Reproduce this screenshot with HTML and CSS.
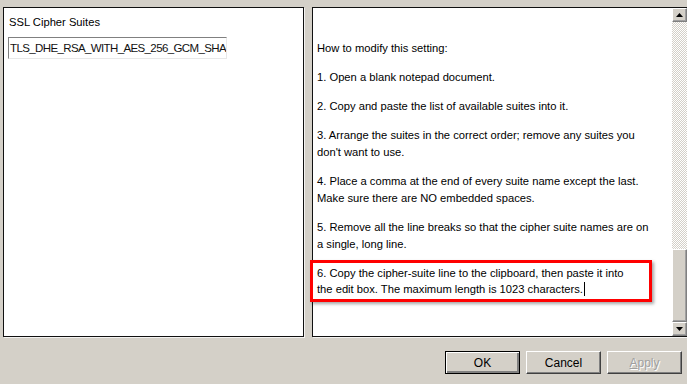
FILE: index.html
```html
<!DOCTYPE html>
<html>
<head>
<meta charset="utf-8">
<link rel="stylesheet" href="styles.css">
</head>
<body>
<div class="dialog">
  <div class="panels">
    <div class="panel left">
      <div class="label">SSL Cipher Suites</div>
      <div class="field"><span class="field-text">TLS_DHE_RSA_WITH_AES_256_GCM_SHA</span></div>
    </div>
    <div class="panel right">
      <div class="help">
        <p>How to modify this setting:</p>
        <p>1. Open a blank notepad document.</p>
        <p>2. Copy and paste the list of available suites into it.</p>
        <p>3. Arrange the suites in the correct order; remove any suites you<br>don't want to use.</p>
        <p>4. Place a comma at the end of every suite name except the last.<br>Make sure there are NO embedded spaces.</p>
        <p>5. Remove all the line breaks so that the cipher suite names are on<br>a single, long line.</p>
        <p class="last">6. Copy the cipher-suite line to the clipboard, then paste it into<br>the edit box. The maximum length is 1023 characters.<span class="caret"></span></p>
        <div class="highlight"></div>
      </div>
      <div class="scrollbar">
        <div class="sb-btn"><svg width="7" height="4" viewBox="0 0 7 4"><path d="M3.5 0 L7 4 L0 4 Z" fill="#000"/></svg></div>
        <div class="sb-track"></div>
        <div class="sb-thumb"></div>
        <div class="sb-btn"><svg width="7" height="4" viewBox="0 0 7 4"><path d="M0 0 L7 0 L3.5 4 Z" fill="#000"/></svg></div>
      </div>
    </div>
  </div>
  <div class="buttons">
    <div class="btn default">OK</div>
    <div class="btn">Cancel</div>
    <div class="btn disabled"><u>A</u>pply</div>
  </div>
</div>
</body>
</html>
```
FILE: styles.css
```css
html, body {
  margin: 0;
  padding: 0;
  background: #d4d0c8;
  overflow: hidden;
}
body {
  width: 687px;
  height: 384px;
  font-family: "Liberation Sans", Arial, sans-serif;
  font-size: 11.2px;
  color: #000;
}
.dialog {
  padding: 7px 0 0 3px;
}
.panels {
  display: flex;
  gap: 8px;
  height: 330px;
}
.panel {
  background: #fff;
  border: 1px solid #111;
  box-shadow: 1px 1px 0 #f4f3f1;
  box-sizing: border-box;
}
.left {
  width: 301px;
  flex: none;
  padding: 6px 0 0 5px;
}
.label {
  line-height: 16px;
  height: 16px;
}
.field {
  margin: 7px 0 0 -1px;
  width: 219px;
  height: 22px;
  box-sizing: border-box;
  border-top: 1px solid #808080;
  border-left: 1px solid #808080;
  border-right: 1px solid #e8e8e8;
  border-bottom: 1px solid #e8e8e8;
  overflow: hidden;
  white-space: nowrap;
  padding: 3px 0 0 1px;
  font-size: 11.5px;
  letter-spacing: -0.62px;
  line-height: 15px;
  color: #111;
}
.right {
  flex: none;
  width: 380px;
  display: flex;
  position: relative;
  border-right: none;
}
.help {
  width: 359px;
  flex: none;
  padding: 32px 0 0 4px;
  box-sizing: border-box;
  position: relative;
}
.help p {
  margin: 0 0 12px 0;
  line-height: 17px;
  white-space: nowrap;
}
.help p.last {
  line-height: 16px;
}
.caret {
  display: inline-block;
  width: 1px;
  height: 14px;
  background: #000;
  vertical-align: -3px;
  margin-left: 1px;
}
.highlight {
  position: absolute;
  left: -3px;
  top: 252px;
  width: 342px;
  height: 42px;
  box-sizing: border-box;
  border: 3px solid #f00;
  box-shadow: 2px 2px 3px rgba(0,0,0,0.35);
}
.scrollbar {
  width: 15px;
  display: flex;
  flex-direction: column;
  background-color: #fff;
  background-image: repeating-conic-gradient(#d4d0c8 0 25%, #fff 0 50%);
  background-size: 2px 2px;
}
.sb-btn, .sb-thumb {
  background: #d4d0c8;
  box-sizing: border-box;
  border-top: 1px solid #fff;
  border-left: 1px solid #fff;
  border-right: 1px solid #808080;
  border-bottom: 1px solid #808080;
  box-shadow: inset -1px -1px 0 #a0a0a0;
}
.sb-btn {
  height: 14px;
  display: flex;
  align-items: center;
  justify-content: center;
}
.sb-track {
  height: 227px;
}
.sb-thumb {
  height: 73px;
}
.buttons {
  display: flex;
  justify-content: flex-end;
  gap: 6px;
  padding: 14px 5px 0 0;
}
.btn {
  width: 75px;
  height: 23px;
  box-sizing: border-box;
  background: #d4d0c8;
  border-top: 1px solid #fff;
  border-left: 1px solid #fff;
  border-right: 1px solid #404040;
  border-bottom: 1px solid #404040;
  box-shadow: inset -1px -1px 0 #808080;
  display: flex;
  align-items: center;
  justify-content: center;
  font-size: 12px;
}
.btn.default {
  border: 1px solid #000;
  box-shadow: inset 1px 1px 0 #fff, inset -2px -2px 0 #808080;
}
.btn.disabled {
  color: #a0a0a0;
  text-shadow: 1px 1px 0 #fff;
}
```
